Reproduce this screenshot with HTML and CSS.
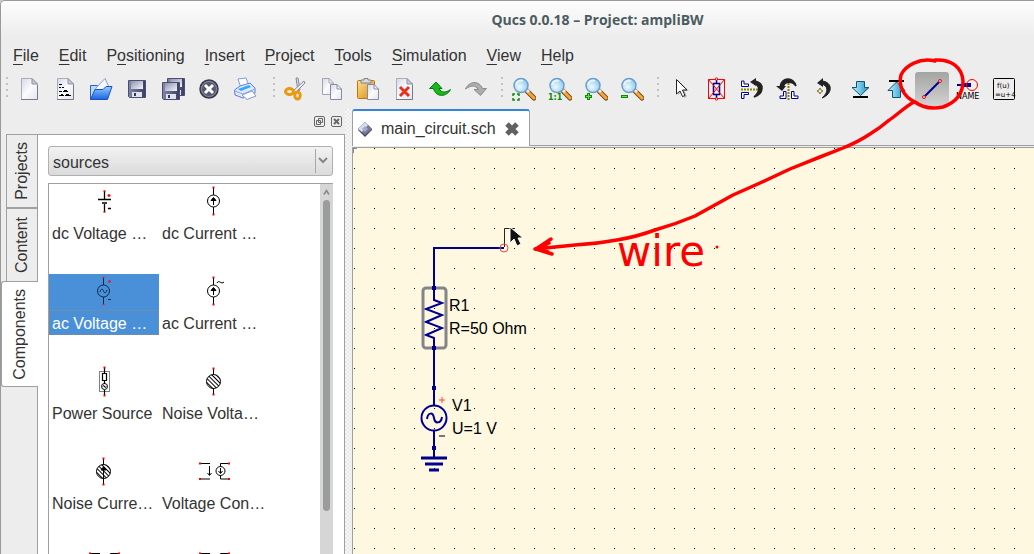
FILE: index.html
```html
<!DOCTYPE html>
<html lang="en">
<head>
<meta charset="utf-8">
<title>Qucs 0.0.18 – Project: ampliBW</title>
<link rel="stylesheet" href="styles.css">
</head>
<body>
<svg class="defs" aria-hidden="true">
  <defs>
    <linearGradient id="paper" x1="0" y1="0" x2="1" y2="1"><stop offset="0" stop-color="#d4d9e8"/><stop offset=".5" stop-color="#fafbfd"/><stop offset="1" stop-color="#e2e5ee"/></linearGradient>
    <linearGradient id="folder" x1="0" y1="0" x2="0" y2="1"><stop offset="0" stop-color="#8fd0ff"/><stop offset="1" stop-color="#1d62e0"/></linearGradient>
    <linearGradient id="disk" x1="0" y1="0" x2="1" y2="0"><stop offset="0" stop-color="#8387a8"/><stop offset="1" stop-color="#3b3e63"/></linearGradient>
    <linearGradient id="label" x1="0" y1="0" x2="1" y2="1"><stop offset="0" stop-color="#8d93b0"/><stop offset="1" stop-color="#f4f6fb"/></linearGradient>
    <linearGradient id="gold" x1="0" y1="0" x2="1" y2="1"><stop offset="0" stop-color="#ffe08a"/><stop offset="1" stop-color="#d98a10"/></linearGradient>
    <radialGradient id="lens" cx=".4" cy=".6" r=".7"><stop offset="0" stop-color="#f0fbff"/><stop offset="1" stop-color="#82c4f2"/></radialGradient>
    <linearGradient id="aqua" x1="0" y1="0" x2="1" y2="0"><stop offset="0" stop-color="#c4f3fb"/><stop offset="1" stop-color="#1593c8"/></linearGradient>
    <symbol id="page" viewBox="0 0 24 24"><path d="M4.500 1.500H15L20.500 7V22.500H4.500Z" fill="url(#paper)" stroke="#a9adbb"/><path d="M15 1.500V7H20.500Z" fill="#c8cbd8" stroke="#8f93a2"/><path d="M4 22.500H20.500V8" fill="none" stroke="#777b88"/></symbol>
    <symbol id="floppy" viewBox="0 0 18 18"><path d="M.5.5H17.500V17.500H1.500L.5 16.500Z" fill="url(#disk)" stroke="#4b4e70"/><path d="M3 1H15V9H3Z" fill="url(#label)"/><path d="M4 12H14V17H4Z" fill="#dfe3ec"/><path d="M6 13H8V16H6Z" fill="#33365a"/></symbol>
    <symbol id="glass" viewBox="0 0 24 24"><path d="M14 13L22 21" stroke="#7d4a12" stroke-width="5" stroke-linecap="round"/><path d="M15 14L22 21" stroke="#f0a941" stroke-width="3" stroke-linecap="round"/><path d="M15 13L17 15" stroke="#e8e8ee" stroke-width="3"/><circle cx="9" cy="8.500" r="7" fill="url(#lens)" stroke="#6f9fc9" stroke-width="1.500"/><path d="M4 8A5 5 0 0 1 11 4" stroke="#fff" stroke-width="2" fill="none" opacity=".7"/></symbol>
    <symbol id="vccs" viewBox="0 0 34 18"><path d="M2 1.500H12M2 17H12M11.500 4V13M9.500 11L11.500 13.500L13.500 11M30 1.500H22.500V17H30" fill="none" stroke="#000" /><circle cx="22.500" cy="9" r="4.500" fill="#fff" stroke="#000"/><path d="M22.500 6V11M20.500 9L22.500 11.500L24.500 9" fill="none" stroke="#000"/><path d="M1 1.500H3M1 17H3M30 1.500H32M30 17H32" stroke="red" stroke-width="2"/></symbol>
    <pattern id="hatch" width="3" height="3" patternUnits="userSpaceOnUse" patternTransform="rotate(-45)"><rect x="0" y="0" width="1" height="3" fill="#000"/></pattern>
    <pattern id="grid" width="20" height="20" patternUnits="userSpaceOnUse"><rect x="1" y="0" width="1" height="1" fill="#000"/></pattern>
  </defs>
</svg>

<div class="window">
  <header class="titlebar"><h1 class="title">Qucs 0.0.18 – Project: ampliBW</h1></header>

  <nav class="menubar" aria-label="Main menu">
    <button class="menu"><u>F</u>ile</button>
    <button class="menu"><u>E</u>dit</button>
    <button class="menu">P<u>o</u>sitioning</button>
    <button class="menu"><u>I</u>nsert</button>
    <button class="menu"><u>P</u>roject</button>
    <button class="menu"><u>T</u>ools</button>
    <button class="menu"><u>S</u>imulation</button>
    <button class="menu"><u>V</u>iew</button>
    <button class="menu"><u>H</u>elp</button>
  </nav>

  <div class="toolbars">
    <div class="toolbar" role="toolbar" aria-label="File">
      <span class="handle"></span>
      <button class="tool" aria-label="New"><svg viewBox="0 0 24 24"><use href="#page"/></svg></button>
      <button class="tool" aria-label="New text"><svg viewBox="0 0 24 24"><use href="#page"/><path d="M6 7.500H9M6 10.500H8M9 10.500H11M6 14.500H9M10 14.500H15M6 18.500H11M12 18.500H18M8 17.500H10M13 17.500H16M11 13.500H14" stroke="#000"/></svg></button>
      <button class="tool" aria-label="Open"><svg viewBox="0 0 24 24"><path d="M1.500 22.500V8.500H8L10 10H18V13" fill="#b5dcff" stroke="#2962c9"/><path d="M7 11L16 1.500L20 10L16 14H6Z" fill="#f4f7ff" stroke="#8b9cc8"/><path d="M1.500 22.500L6 12.500H14L17 9.500H23L18.500 22.500Z" fill="url(#folder)" stroke="#1c4fc0"/></svg></button>
      <button class="tool" aria-label="Save"><svg viewBox="0 0 24 24"><use href="#floppy" x="3" y="3" width="18" height="18"/></svg></button>
      <button class="tool" aria-label="Save all"><svg viewBox="0 0 24 24"><use href="#floppy" x="6" y="1" width="18" height="18"/><use href="#floppy" x="1" y="5" width="18" height="18"/></svg></button>
      <button class="tool" aria-label="Close"><svg viewBox="0 0 24 24"><circle cx="12" cy="12" r="9" fill="#55586f" stroke="#3a3c4c" stroke-width="1.500"/><circle cx="12" cy="12" r="7.500" fill="none" stroke="#898ca3"/><path d="M8 8L16 16M16 8L8 16" stroke="#fff" stroke-width="3"/></svg></button>
      <button class="tool" aria-label="Print"><svg viewBox="0 0 24 24"><path d="M5 2L13 1L16 9L8 11Z" fill="#fff" stroke="#7ba0df"/><path d="M1.500 13L7 9L17 6L22 11V16L10 21L2 18Z" fill="#dfe8fb" stroke="#5c7fd6"/><path d="M5 12L16 8L18 10L8 14Z" fill="#36a7ff"/><path d="M2 14L10 17L22 12" fill="none" stroke="#8da7e4"/><path d="M9 18L19 14L23 19L14 22.500Z" fill="#fff" stroke="#8396d4"/></svg></button>
    </div>
    <div class="toolbar" role="toolbar" aria-label="Edit">
      <span class="handle"></span>
      <button class="tool" aria-label="Cut"><svg viewBox="0 0 24 24"><path d="M12 1L14 14L16 13L14 1Z" fill="#d9dbe4" stroke="#84879a"/><path d="M20 4L9 14L11 16L21 6Z" fill="#eceef4" stroke="#84879a"/><ellipse cx="5.500" cy="14.500" rx="4" ry="3" fill="none" stroke="#e89a0c" stroke-width="3"/><ellipse cx="13.500" cy="18.500" rx="2.700" ry="3.500" fill="none" stroke="#e89a0c" stroke-width="3"/></svg></button>
      <button class="tool" aria-label="Copy"><svg viewBox="0 0 24 24"><path d="M2.500 1.500H9L13.500 6V17.500H2.500Z" fill="url(#paper)" stroke="#9fa3b5"/><path d="M9 1.500V6H13" fill="none" stroke="#9fa3b5"/><path d="M10.500 7.500H17L21.500 12V22.500H10.500Z" fill="url(#paper)" stroke="#888ca2"/><path d="M17 7.500V12H21.500" fill="none" stroke="#888ca2"/></svg></button>
      <button class="tool" aria-label="Paste"><svg viewBox="0 0 24 24"><rect x="1.500" y="3.500" width="17" height="18" rx="1" fill="url(#gold)" stroke="#b8780f"/><path d="M5 6V3H8V1.500H12V3H15V6Z" fill="#d8dae2" stroke="#7e8190"/><path d="M11.500 7.500H18L22.500 12V22.500H11.500Z" fill="url(#paper)" stroke="#888ca2"/><path d="M18 7.500V12H22.500" fill="none" stroke="#888ca2"/></svg></button>
      <button class="tool" aria-label="Delete"><svg viewBox="0 0 24 24"><use href="#page"/><path d="M8 10L17 19M17 10L8 19" stroke="#e8301c" stroke-width="3"/></svg></button>
      <button class="tool" aria-label="Undo"><svg viewBox="0 0 24 24"><path d="M1.500 11.500L8 5L14 11.500H11C13 16 18 16 22.500 12.500C19 20 8 21 5.500 11.500Z" fill="#17b81d" stroke="#08790e"/></svg></button>
      <button class="tool" aria-label="Redo"><svg viewBox="0 0 24 24"><path d="M1.500 12C5 4 15 3 18.500 11.500H22.500L16.500 18.500L10 12.500H14C12 8 7 8 1.500 12Z" fill="#acacac" stroke="#8b8b8b"/></svg></button>
    </div>
    <div class="toolbar" role="toolbar" aria-label="View">
      <span class="handle"></span>
      <button class="tool" aria-label="View all"><svg viewBox="0 0 24 24"><use href="#glass"/><path d="M1 19V17H3M5 17H7V19M7 21V23H5M3 23H1V21" fill="none" stroke="#078c07" stroke-width="1.500"/></svg></button>
      <button class="tool" aria-label="View 1:1"><svg viewBox="0 0 24 24"><use href="#glass"/><text class="ratio" x="0" y="23">1:1</text></svg></button>
      <button class="tool" aria-label="Zoom in"><svg viewBox="0 0 24 24"><use href="#glass"/><path d="M1 19.500H8M4.500 16V23" stroke="#078c07" stroke-width="3"/><path d="M2 19.500H7M4.500 17V22" stroke="#6fe04a"/></svg></button>
      <button class="tool" aria-label="Zoom out"><svg viewBox="0 0 24 24"><use href="#glass"/><path d="M1 19.500H8" stroke="#078c07" stroke-width="3"/><path d="M2 19.500H7" stroke="#6fe04a"/></svg></button>
    </div>
    <div class="toolbar" role="toolbar" aria-label="Work">
      <span class="handle"></span>
      <button class="tool" aria-label="Select"><svg viewBox="0 0 24 24"><path d="M10 3V18L13.500 15L16 21L19 19.500L16.500 14H21Z" fill="#888" opacity=".5"/><path d="M8.500 2.500V17L12 14L14.500 19.500L17 18.500L14.500 13H19Z" fill="#fff" stroke="#222"/></svg></button>
      <button class="tool" aria-label="Deactivate"><svg viewBox="0 0 24 24"><path d="M12.500 3V6M12.500 18V21M9.500 6.500H15.500V17.500H9.500Z" fill="none" stroke="#000090" stroke-width="1.500"/><path d="M4.500 2.500H20.500V21.500H4.500ZM4.500 2.500L20.500 21.500M20.500 2.500L4.500 21.500" fill="none" stroke="red"/><circle cx="12.500" cy="2" r="1.200" fill="#fff" stroke="red"/><circle cx="12.500" cy="22" r="1.200" fill="#fff" stroke="red"/></svg></button>
      <button class="tool" aria-label="Mirror about X axis"><svg viewBox="0 0 24 24"><path d="M1.500 4V9.500H8.500V7H4V4ZM1.500 21.500V15.500H8.500V17.500H4V21.500Z" fill="#fff" stroke="#000090"/><path d="M1 12.500H18" stroke="#8b8500" stroke-width="2" stroke-dasharray="2 1"/><path d="M15 4C25 6 24 17 14 20C20 15 20 9 15 7Z" fill="#222" stroke="#222" stroke-width="1.500"/><path d="M10 5L16 1V9Z" fill="#222"/></svg></button>
      <button class="tool" aria-label="Mirror about Y axis"><svg viewBox="0 0 24 24"><path d="M4 21.500H10V14.500H7.500V19H4ZM22 21.500H15.500V14.500H18V19H22Z" fill="#fff" stroke="#000090"/><path d="M12.500 6V23" stroke="#8b8500" stroke-width="2" stroke-dasharray="2 1"/><path d="M4 10C5 0 17 -1 20 9C16 4 9 4 7 10Z" fill="#222" stroke="#222" stroke-width="1.500"/><path d="M0 9H10L6 14Z" fill="#222"/></svg></button>
      <button class="tool" aria-label="Rotate"><svg viewBox="0 0 24 24"><path d="M10 4C21 5 21 17 10 21C17 15 16 9 10 7Z" fill="#222" stroke="#222"/><path d="M5 6L11 1V10Z" fill="#222"/><path d="M8 11L9 13L11 14L9 15L8 17L7 15L5 14L7 13Z" fill="#fff4c8" stroke="#81713c"/></svg></button>
      <button class="tool" aria-label="Go into subcircuit"><svg viewBox="0 0 24 24"><path d="M8.500 4.500H16.500V10.500H21L12.500 18.500L4 10.500H8.500Z" fill="url(#aqua)" stroke="#14536f"/><path d="M5 20H20" stroke="#000" stroke-width="2"/></svg></button>
      <button class="tool" aria-label="Pop out"><svg viewBox="0 0 24 24"><path d="M8.500 20.500H16.500V13.500H21L12.500 5L4 13.500H8.500Z" fill="url(#aqua)" stroke="#14536f"/><path d="M5 4H20" stroke="#000" stroke-width="2"/></svg></button>
      <button class="tool tool-on" aria-label="Wire" aria-pressed="true"><svg viewBox="0 0 24 24"><path d="M4 20L20 4" stroke="#000090" stroke-width="2"/><circle cx="4" cy="20" r="1.500" fill="#ddd" stroke="red"/><circle cx="20" cy="4" r="1.500" fill="#ddd" stroke="red"/></svg></button>
      <button class="tool" aria-label="Wire label"><svg viewBox="0 0 24 24"><path d="M1 8H8" stroke="#000090" stroke-width="2"/><path d="M8 8H15" stroke="#000090" stroke-width="4"/><circle cx="16" cy="8" r="5.500" fill="none" stroke="red"/><text class="tiny" x="0" y="22">NAME</text></svg></button>
      <button class="tool" aria-label="Insert equation"><svg viewBox="0 0 24 24"><rect x="1.500" y="1.500" width="21" height="21" rx="1" fill="none" stroke="#000"/><text class="mini" x="5" y="11">f(u)</text><text class="mini" x="3" y="20">=u+4</text></svg></button>
    </div>
  </div>

  <main class="work">
    <aside class="dock">
      <div class="dock-head">
        <button class="dock-btn" aria-label="Float"><svg viewBox="0 0 11 11"><rect x=".5" y=".5" width="10" height="10" rx="1.500"/><path d="M4.500 2.500H8.500V6.500H4.500ZM2.500 4.500H6.500V8.500H2.500Z"/></svg></button>
        <button class="dock-btn" aria-label="Close"><svg viewBox="0 0 11 11"><rect x=".5" y=".5" width="10" height="10" rx="1.500"/><path d="M3 3L8 8M8 3L3 8" stroke-width="2"/></svg></button>
      </div>
      <div class="dock-body">
        <div class="side-tabs" role="tablist">
          <button class="side-tab" role="tab"><span>Projects</span></button>
          <button class="side-tab" role="tab"><span>Content</span></button>
          <button class="side-tab side-tab-on" role="tab" aria-selected="true"><span>Components</span></button>
        </div>
        <section class="pane">
          <div class="combo">
            <select class="combo-select" aria-label="Component group"><option>sources</option></select>
            <svg class="combo-arrow" viewBox="0 0 18 24"><path d="M.5 0V24" stroke="#a8a8a8"/><path d="M4 9L8 13L12 9" fill="none" stroke="#868886" stroke-width="2"/></svg>
          </div>
          <div class="list">
            <ul class="items">
              <li class="item"><svg class="sym" viewBox="0 0 36 36"><path d="M18.500 7V15M12 15.500H25M16 19H21M18.500 20V28M22 24.500H25" stroke="#000" fill="none" stroke-width="1.300"/><path d="M17.500 7H19.500M17.500 28H19.500M21.500 11.500H24.500M23 10V13" stroke="red" stroke-width="1.300"/></svg><span class="name">dc Voltage …</span></li>
              <li class="item"><svg class="sym" viewBox="0 0 36 36"><path d="M17.500 4V11M17.500 23V30M17.500 21V14M15 16.500L17.500 13.500L20 16.500Z" stroke="#000"/><circle cx="17.500" cy="17" r="6" fill="none" stroke="#000"/><path d="M16.500 3.500H18.500M16.500 30.500H18.500" stroke="red" stroke-width="2"/></svg><span class="name">dc Current …</span></li>
              <li class="item item-on"><svg class="sym" viewBox="0 0 36 36"><g fill="none" stroke="#0c2948"><path d="M17.500 4V11M17.500 23V30M22 25.500H25"/><circle cx="17.500" cy="17" r="6"/><path d="M14 18C15 14 17 15 17.500 17C18 19 20 20 21 16"/></g><path d="M16.500 3.500H18.500M16.500 30.500H18.500M22 7.500H25M23.500 6V9" stroke="#d02846" stroke-width="1.300"/></svg><span class="name">ac Voltage …</span></li>
              <li class="item"><svg class="sym" viewBox="0 0 36 36"><path d="M17.500 4V11M17.500 23V30M17.500 21V14M15 16.500L17.500 13.500L20 16.500Z" stroke="#000"/><circle cx="17.500" cy="17" r="6" fill="none" stroke="#000"/><path d="M21 9C23 5 25 11 28 8" fill="none" stroke="#000"/><path d="M16.500 3.500H18.500M16.500 30.500H18.500" stroke="red" stroke-width="2"/></svg><span class="name">ac Current …</span></li>
              <li class="item"><svg class="sym" viewBox="0 0 36 36"><path d="M18.500 4V9M18.500 17V20M18.500 26V31M16.500 9.500H20.500V16.500H16.500Z" stroke="#000" fill="none" stroke-width="1.200"/><circle cx="18.500" cy="22.500" r="3" fill="none" stroke="#000"/><path d="M16.500 22.500L18 21.500L19 23.500L20.500 22.500" fill="none" stroke="#000"/><rect x="13.500" y="7.500" width="10" height="20" fill="none" stroke="#000" stroke-dasharray="1 1"/><path d="M17.500 3.500H19.500M17.500 31.500H19.500" stroke="red" stroke-width="2"/></svg><span class="name">Power Source</span></li>
              <li class="item"><svg class="sym" viewBox="0 0 36 36"><path d="M17.500 5V11M17.500 24V30" stroke="#000"/><circle cx="17.500" cy="17.500" r="7" fill="url(#hatch)" stroke="#000"/><path d="M16.500 4.500H18.500M16.500 30.500H18.500" stroke="red" stroke-width="2"/></svg><span class="name">Noise Volta…</span></li>
              <li class="item"><svg class="sym" viewBox="0 0 36 36"><path d="M17.500 5V11M17.500 24V30" stroke="#000"/><circle cx="17.500" cy="17.500" r="7" fill="url(#hatch)" stroke="#000"/><path d="M17.500 24V14M15 16L17.500 13L20 16Z" stroke="#000"/><path d="M16.500 4.500H18.500M16.500 30.500H18.500" stroke="red" stroke-width="2"/></svg><span class="name">Noise Curre…</span></li>
              <li class="item"><svg class="sym" viewBox="0 0 36 36"><use href="#vccs" x="2" y="8" width="34" height="18"/></svg><span class="name">Voltage Con…</span></li>
              <li class="item"><svg class="sym" viewBox="0 0 36 36"><use href="#vccs" x="2" y="8" width="34" height="18"/></svg></li>
              <li class="item"><svg class="sym" viewBox="0 0 36 36"><use href="#vccs" x="2" y="8" width="34" height="18"/></svg></li>
            </ul>
            <div class="scroll"><svg class="scroll-up" viewBox="0 0 13 13"><path d="M4 9L6.500 5L9 9" fill="none" stroke="#888" stroke-width="1.500"/></svg><span class="thumb"></span></div>
          </div>
        </section>
      </div>
    </aside>
    <div class="splitter"></div>
    <section class="docs">
      <div class="doc-tabs" role="tablist">
        <div class="doc-tab" role="tab" aria-selected="true">
          <svg class="doc-icon" viewBox="0 0 16 16"><path d="M8 1L15 8V9L8 16L1 9V8Z" fill="#45485f"/><path d="M8 1L15 8L8 14L1 8Z" fill="#74799a"/><path d="M8 1L11 4L5 11L1 8Z" fill="#d9dce9"/><path d="M8 5L11 8L8 11L5 8Z" fill="#a6aac4"/></svg>
          <span class="doc-name">main_circuit.sch</span>
          <button class="doc-close" aria-label="Close tab"><svg viewBox="0 0 16 16"><path d="M3 3L13 13M13 3L3 13" stroke="#60625f" stroke-width="5"/></svg></button>
        </div>
      </div>
      <div class="canvas">
        <svg class="schematic" role="img" aria-label="Schematic">
          <rect width="100%" height="100%" fill="url(#grid)"/>
          <path d="M0 .5H4M.5 0V5" stroke="#8a8a8a"/>
          <g fill="none" stroke="#000090" stroke-width="2">
            <path d="M151 100H81V140M81 200V257M81 283V310"/>
            <path d="M81 140V152L89 155L73 161L89 167L73 174L89 180L73 187L81 190V200"/>
            <circle cx="81" cy="270" r="12.500"/>
            <path d="M74 271C75 264 80 264 81 270C82 276 88 276 89 269"/>
            <path d="M68 310H94M72 316H90M76 322H86" stroke-width="3"/>
          </g>
          <rect x="70" y="140" width="23" height="60" rx="3" fill="none" stroke="#84858a" stroke-width="3"/>
          <path d="M79 138H83V142H79ZM79 198H83V202H79ZM79 238H83V242H79ZM79 298H83V302H79Z" fill="#000090"/>
          <path d="M151.500 99V80.500H162" fill="none" stroke="#222"/>
          <circle cx="151" cy="100" r="4" fill="none" stroke="#f44"/>
          <path d="M86 252H92M89 249V255" stroke="#f44"/>
          <path d="M86 288H92" stroke="#777" stroke-width="2"/>
          <text class="part" x="96" y="163">R1</text>
          <text class="part" x="96" y="186">R=50 Ohm</text>
          <text class="part" x="99" y="263">V1</text>
          <text class="part" x="99" y="286">U=1 V</text>
          <path d="M157 79V95L161 91L164 98L168 96L165 90H170Z" fill="#111" stroke="#fff"/>
        </svg>
      </div>
    </section>
  </main>

  <svg class="annotation" viewBox="0 0 1034 554" role="img" aria-label="Note pointing at the wire tool">
    <g fill="none" stroke="red" stroke-width="3.500" stroke-linecap="round" stroke-linejoin="round">
      <path d="M935 61C920 57 905 66 901 75C898 86 904 97 915 102C923 108 933 109 943 107C957 102 963 92 963 81C962 67 951 59 935 60"/>
      <path d="M914 102C906 106 897 115 888 121Q880 128 870 134Q858 142 843 148L820 157L790 169L760 183L733 195L695 216Q676 224 655 230Q636 237 617 240Q596 244 575 245L535 249"/>
      <path d="M551 239L536 249L552 254M549 243L537 249L548 252"/>
    </g>
    <circle cx="717" cy="247" r="1.500" fill="red"/>
    <text class="note" x="617" y="266">wire</text>
  </svg>
</div>
</body>
</html>
```
FILE: styles.css
```css
* { box-sizing: border-box; }

body {
  margin: 0;
  font: 16px/20px "Liberation Sans", Arial, sans-serif;
  color: #333;
  background: #ccc;
}

button {
  padding: 0;
  border: 0;
  background: none;
  font: inherit;
  color: inherit;
}

svg { display: block; }

.defs { position: absolute; width: 0; height: 0; }

.window {
  position: relative;
  display: flex;
  flex-direction: column;
  height: 100vh;
  overflow: hidden;
  border-top: 1px solid #999;
  border-left: 1px solid #999;
  border-top-left-radius: 5px;
  background: #ededed;
}

.titlebar {
  padding: 9px 0 6px 160px;
  background: linear-gradient(#fdfdfd, #ededed);
}

.title {
  margin: 0;
  font: bold 14px/20px "Open Sans", sans-serif;
  text-align: center;
  color: #4c5b60;
}

.menubar {
  display: flex;
  gap: 20px;
  padding: 10px 12px 6px;
}

.menu { line-height: 20px; }

.menu u {
  text-decoration-thickness: 1px;
  text-underline-offset: 3px;
}

.toolbars { display: flex; }

.toolbar { display: flex; gap: 2px; }

.handle {
  width: 2px;
  margin: 5px 2px 5px 8px;
  background: repeating-linear-gradient(#c2c2c2 0 2px, transparent 2px 6px);
}

.toolbar:first-child .handle { margin-left: 5px; }

.toolbar:nth-child(2) .handle { margin-left: 11px; }

.tool {
  display: grid;
  place-items: center;
  width: 34px;
  height: 34px;
  border-radius: 3px;
}

.tool svg { width: 24px; height: 24px; }

.tool-on { background: linear-gradient(#a3a5a2, #d2d2d2); }

.ratio { font: bold 8px "DejaVu Sans", sans-serif; fill: #078c07; }

.tiny { font: 8px "DejaVu Sans", sans-serif; fill: #000; }

.mini { font: 7px "DejaVu Sans", sans-serif; fill: #000; }

.work {
  display: flex;
  flex: 1;
  min-height: 0;
  padding-top: 3px;
}

.dock {
  display: flex;
  flex-direction: column;
  width: 344px;
}

.dock-head {
  display: flex;
  justify-content: flex-end;
  gap: 6px;
  padding: 7px 3px 7px;
}

.dock-btn svg {
  width: 11px;
  height: 11px;
  fill: none;
  stroke: #666;
}

.dock-body { display: flex; flex: 1; min-height: 0; }

.side-tabs {
  display: flex;
  flex-direction: column;
  width: 36px;
  padding-left: 5px;
}

.side-tab {
  display: grid;
  place-items: center;
  height: 74px;
  border: 1px solid #a0a0a0;
  border-width: 1px 0 1px 1px;
}

.side-tab span {
  writing-mode: vertical-rl;
  transform: rotate(180deg);
}

.side-tab-on {
  position: relative;
  z-index: 1;
  height: 106px;
  margin: -1px -1px 0 -5px;
  border-radius: 3px 0 0 3px;
  background: #fff;
}

.pane {
  display: flex;
  flex: 1;
  flex-direction: column;
  gap: 7px;
  padding: 11px 11px 0 10px;
  border: 1px solid #a0a0a0;
  border-bottom: 0;
  background: #fff;
}

.combo { display: grid; }

.combo-select {
  grid-area: 1 / 1;
  height: 30px;
  padding: 3px 24px 0 4px;
  appearance: none;
  border: 1px solid #b0b0b0;
  border-radius: 3px;
  background: linear-gradient(#f2f2f2, #dadada);
  font: inherit;
  color: #333;
}

.combo-arrow {
  grid-area: 1 / 1;
  place-self: center end;
  width: 18px;
  height: 24px;
  pointer-events: none;
}

.list {
  display: flex;
  flex: 1;
  min-height: 0;
  overflow: hidden;
  border-top: 1px solid #a0a0a0;
  border-left: 1px solid #a0a0a0;
}

.items {
  display: grid;
  flex: 1;
  grid-template-columns: 110px 110px;
  grid-auto-rows: 61px;
  row-gap: 29px;
  margin: 0;
  padding: 0;
  list-style: none;
}

.item { display: flex; flex-direction: column; }

.sym { width: 36px; height: 36px; margin: 0 auto; }

.name {
  padding: 3px 3px 1px;
  border: 1px solid transparent;
  border-width: 1px 0 0;
  white-space: nowrap;
}

.item-on { background: #4a90d9; color: #fff; }

.item-on .name { border: 1px dotted #8b8b80; padding: 3px 2px 0; }

.scroll {
  display: flex;
  flex-direction: column;
  align-items: center;
  width: 13px;
  background: #d6d6d6;
}

.scroll-up { width: 13px; height: 16px; flex: none; }

.thumb {
  width: 7px;
  height: 84%;
  border-radius: 4px;
  background: #9a9c9c;
}

.splitter {
  width: 7px;
  background: repeating-conic-gradient(#f8f8f8 0 25%, #e8e8e8 0 50%) 0 0 / 4px 4px;
}

.docs { display: flex; flex: 1; flex-direction: column; min-width: 0; }

.doc-tabs {
  display: flex;
  border-bottom: 1px solid #a0a0a0;
}

.doc-tab {
  display: flex;
  align-items: center;
  gap: 8px;
  height: 37px;
  margin-bottom: -1px;
  padding: 0 9px 0 4px;
  border: 1px solid #a0a0a0;
  border-top: 2px solid #3584dc;
  border-bottom: 0;
  border-radius: 3px 3px 0 0;
  background: #fff;
}

.doc-icon, .doc-close svg { width: 16px; height: 16px; }

.canvas {
  flex: 1;
  min-height: 0;
  border: 1px solid #a0a0a0;
  border-width: 1px 0 0 1px;
  margin-top: 1px;
  background: #fff8e1;
}

.schematic { width: 100%; height: 100%; }

.part { font: 16px "Liberation Sans", Arial, sans-serif; fill: #000; }

.annotation {
  position: absolute;
  top: -1px;
  left: -1px;
  width: 1034px;
  height: 554px;
  pointer-events: none;
}

.note { font: 42px "DejaVu Sans", sans-serif; fill: red; }
```
